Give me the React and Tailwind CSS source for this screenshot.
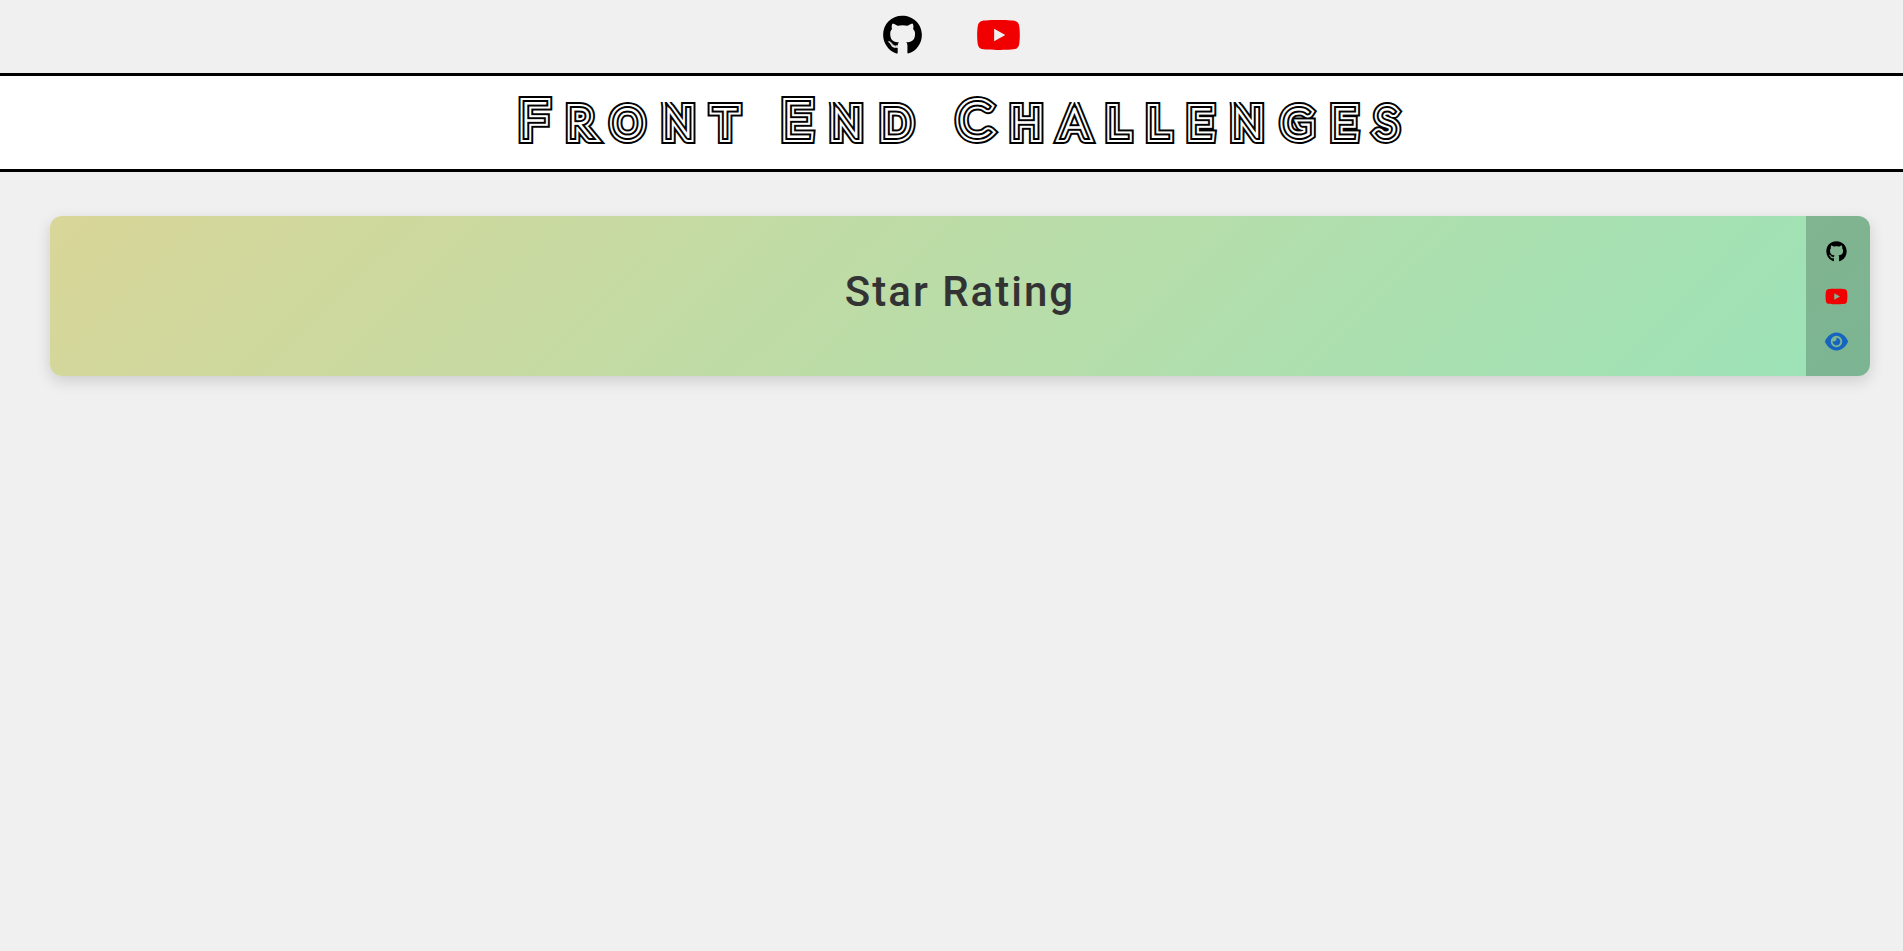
import { FaGithub, FaYoutube } from "react-icons/fa";
import { FaEye } from "react-icons/fa6";

const titleWords = ["Front", "End", "Challenges"];

const challenges = [{ name: "Star Rating", github: "#github", youtube: "#youtube", live: "#live" }];

function TopBar() {
  return (
    <nav aria-label="Social links" className="flex items-center justify-center gap-[54px] pt-[15px] pb-[18px]">
      <a href="#github" aria-label="GitHub" className="text-black">
        <FaGithub className="h-10 w-[39px]" />
      </a>
      <a href="#youtube" aria-label="YouTube" className="text-[#f00000]">
        <FaYoutube className="h-10 w-[45px]" />
      </a>
    </nav>
  );
}

// Alternating black and white strokes of shrinking width give the neon-tube lettering.
// The clip keeps the pointed joins of A and N level with the other letters.
function NeonText({ text, className }) {
  return (
    <span
      data-text={text}
      className={
        className +
        " relative inline-block leading-[69px] after:absolute after:top-0 after:left-0 after:text-white after:content-[attr(data-text)] after:[-webkit-text-stroke:2px_white]"
      }
    >
      <span
        data-text={text}
        className="[-webkit-text-stroke:14px_black] before:absolute before:top-0 before:left-0 before:text-white before:content-[attr(data-text)] before:[-webkit-text-stroke:10px_white] after:absolute after:top-0 after:left-0 after:text-black after:content-[attr(data-text)] after:[-webkit-text-stroke:6px_black]"
      >
        {text}
      </span>
    </span>
  );
}

function Title() {
  return (
    <header className="flex justify-center border-y-[3px] border-black bg-white pt-2 pb-3">
      <h1 className="pl-[35px] font-['Lato'] text-base leading-none font-thin tracking-[21px] whitespace-nowrap text-black uppercase">
        {titleWords.map((word, index) => (
          <span key={word}>
            {index > 0 && " "}
            <NeonText text={word[0]} className="text-[48px]" />
            <NeonText text={word.slice(1)} className="text-[39px] [clip-path:inset(14px_-20px_12px_-20px)]" />
          </span>
        ))}
      </h1>
    </header>
  );
}

function ChallengeCard({ challenge }) {
  return (
    <li className="flex h-40 overflow-hidden rounded-xl bg-[linear-gradient(135deg,#d9d698,#9be3b8)] shadow-[0_5px_15px_rgba(0,0,0,0.15)]">
      <h2 className="flex flex-1 items-center justify-center pb-2.5 pl-16 font-['Roboto'] text-[42px] font-medium tracking-[2px] text-[#333]">
        {challenge.name}
      </h2>
      <div className="flex w-16 flex-col items-center justify-center gap-6 bg-black/20 pt-px pr-1">
        <a href={challenge.github} aria-label={challenge.name + " on GitHub"} className="text-black">
          <FaGithub className="h-[21px] w-[21px]" />
        </a>
        <a href={challenge.youtube} aria-label={challenge.name + " on YouTube"} className="text-[#f00000]">
          <FaYoutube className="h-[21px] w-[23px]" />
        </a>
        <a href={challenge.live} aria-label={challenge.name + " live view"} className="text-[#1565c0]">
          <FaEye className="h-[21px] w-[23px]" />
        </a>
      </div>
    </li>
  );
}

export default function App() {
  return (
    <div className="min-h-screen bg-[#f0f0f0]">
      <TopBar />
      <Title />
      <main className="pt-11 pr-[33px] pb-11 pl-[50px]">
        <ul className="grid gap-8">
          {challenges.map((challenge) => (
            <ChallengeCard key={challenge.name} challenge={challenge} />
          ))}
        </ul>
      </main>
    </div>
  );
}
